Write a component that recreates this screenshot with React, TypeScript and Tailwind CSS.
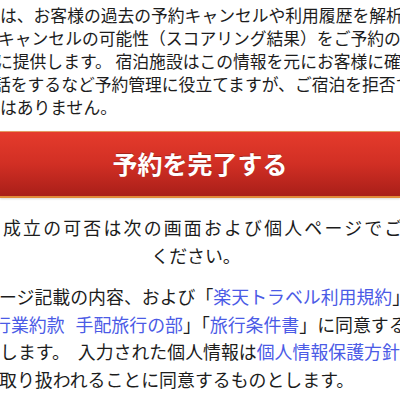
export default function App() {
  return (
    <main className="h-[400px] w-[400px] overflow-hidden bg-white font-['Noto_Sans_CJK_JP',sans-serif] text-[#1c1c1c]">
      <div className="whitespace-nowrap pt-[4px] text-[16.8px] leading-[23px]">
        <p>は、お客様の過去の予約キャンセルや利用履歴を解析し、</p>
        <p className="ml-[-2px]">キャンセルの可能性（スコアリング結果）をご予約の宿泊施設</p>
        <p className="ml-[-4px]">に提供します。 宿泊施設はこの情報を元にお客様に確認のお電</p>
        <p className="ml-[-6px]">話をするなど予約管理に役立てますが、ご宿泊を拒否すること</p>
        <p>はありません。</p>
      </div>

      <button
        type="button"
        className="mt-[12px] flex h-[67px] w-full items-center justify-center border-t border-b-2 border-t-[#e39a62] border-b-[#e08a3a] bg-[linear-gradient(180deg,#e53b2c_0%,#d12f24_50%,#a91f19_100%)] text-[25px] font-bold text-white shadow-[0_1px_2px_rgba(0,0,0,0.15)] [text-shadow:0_-1px_0_rgba(0,0,0,0.25)]"
      >
        予約を完了する
      </button>

      <div className="mt-[16px] whitespace-nowrap text-[17.9px] leading-[27.5px]">
        <p className="ml-[3px] tracking-[2.2px]">成立の可否は次の画面および個人ページでご確認</p>
        <p className="pr-[8px] text-center">ください。</p>
      </div>

      <div className="mt-[14px] whitespace-nowrap text-[17.9px] leading-[27.5px]">
        <p className="ml-[-1px]">
          ージ記載の内容、および「<a className="text-[#4b5be6]">楽天トラベル利用規約</a>」
        </p>
        <p className="ml-[-7px]">
          <a className="text-[#4b5be6]">
            行業約款<span className="inline-block w-[11px]" />手配旅行の部
          </a>
          」「<a className="text-[#4b5be6]">旅行条件書</a>」に同意する
        </p>
        <p>
          します。<span className="inline-block w-[8px]" />入力された個人情報は
          <a className="text-[#4b5be6]">個人情報保護方針</a>に
        </p>
        <p className="ml-[-1px]">取り扱われることに同意するものとします。</p>
      </div>
    </main>
  );
}
